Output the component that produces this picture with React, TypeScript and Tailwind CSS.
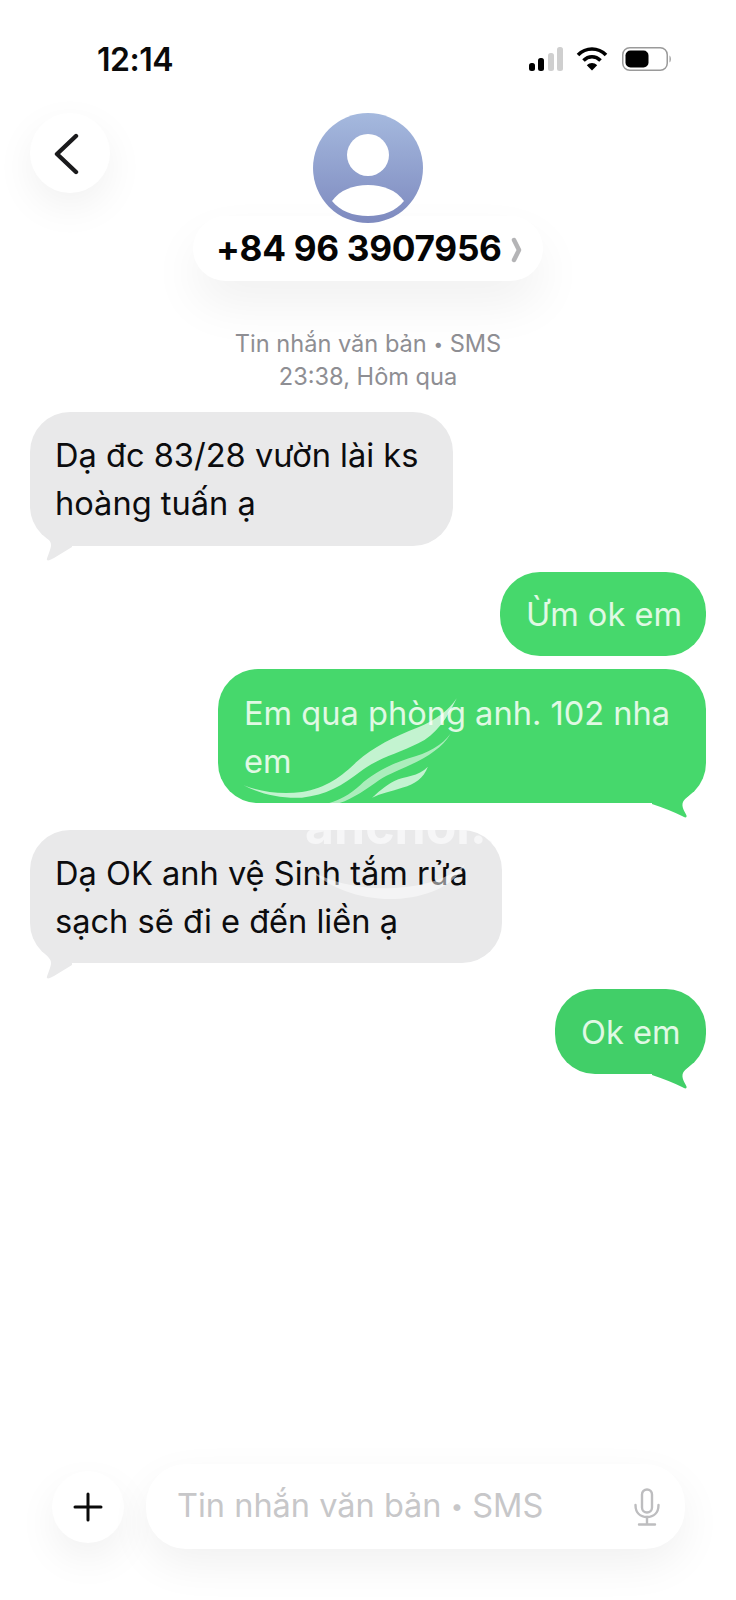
import React from "react";

function GrayTail() {
  return (
    <svg className="absolute left-[10px] top-[118px]" width="40" height="32" viewBox="0 0 40 32">
      <path d="M0 0 C4 6 12 10 11 16 C10 22 6 29 7 30 C8 31 10 30 14 28 L32 17 L32 0 Z" fill="#e9e9ea" />
    </svg>
  );
}

function GreenTail({ color }: { color: string }) {
  return (
    <svg className="absolute right-0 bottom-[-17px]" width="60" height="50" viewBox="0 0 60 50">
      <path d="M6 30 L6 34 C18 38 28 42 36 46 C39 48 41 48 40.5 45.5 C39 42 35 37 37 32 C39 28 45 25 49 18 L6 18 Z" fill={color} />
    </svg>
  );
}

function Swoosh() {
  return (
    <svg
      className="absolute inset-0 w-full h-full pointer-events-none"
      viewBox="55 58 1425 400"
      preserveAspectRatio="none"
      fill="#ffffff"
    >
      <path opacity="0.68" d="M752 145 C730 180 690 210 640 232 C570 260 510 290 460 335 C420 375 370 415 300 425 C240 433 180 425 130 405 C180 432 240 445 300 442 C370 435 420 405 470 365 C510 330 580 310 640 280 C690 255 725 205 752 145 Z" />
      <path opacity="0.55" d="M735 250 C710 285 670 310 610 325 C550 345 500 375 470 405 C440 432 410 450 380 458 L410 458 C450 445 490 415 525 390 C575 355 690 330 735 250 Z" />
      <path opacity="0.68" d="M668 350 C640 380 600 378 570 392 C540 408 520 428 505 442 C530 430 560 424 595 412 C630 402 655 385 668 350 Z" />
    </svg>
  );
}

function Watermark() {
  return (
    <div className="absolute inset-0 overflow-hidden rounded-[38px] pointer-events-none">
      <div className="absolute left-[275px] top-[-26px] text-[50px] leading-[44px] font-bold text-[#f6f6f7] whitespace-nowrap">
        anchoi.a
      </div>
      <svg className="absolute left-[280px] top-[34px]" width="160" height="36" viewBox="0 0 160 36">
        <path d="M0 6 C20 18 50 26 85 24 C115 22 140 14 155 0 C145 22 115 34 85 35 C50 36 20 24 0 6 Z" fill="#ffffff" opacity="0.5" />
      </svg>
    </div>
  );
}

function Bubble({
  children,
  green,
  last,
  className,
  tail,
  overlay,
}: {
  children: React.ReactNode;
  green?: boolean;
  last?: boolean;
  className: string;
  tail?: React.ReactNode;
  overlay?: React.ReactNode;
}) {
  return (
    <div
      className={`relative rounded-[40px] text-[32.6px] leading-[48px] whitespace-nowrap ${
        green ? "text-[#e0f9e4]" : "text-[#0c0c0e]"
      } ${green ? (last ? "bg-[#41cf68]" : "bg-[#46d86c]") : "bg-[#e9e9ea]"} ${className}`}
    >
      {tail}
      <div className="relative">{children}</div>
      {overlay}
    </div>
  );
}

export default function App() {
  return (
    <div
      className="relative w-[736px] h-[1600px] bg-white overflow-hidden flex flex-col px-[30px]"
      style={{ fontFamily: 'Inter, "Noto Sans", "Liberation Sans", sans-serif' }}
    >
      {/* status bar */}
      <div className="h-[113px] flex items-start justify-between pt-[42px] pl-[67px] pr-[34px] shrink-0">
        <div className="text-[32px] leading-[36px] font-semibold text-[#0a0a0a] tracking-[-0.5px]">12:14</div>
        <div className="flex items-center gap-[12px] pt-[5px]">
          <svg width="36" height="24" viewBox="0 0 36 24">
            <rect x="1" y="16" width="6" height="8" rx="2.5" fill="#000" />
            <rect x="10" y="11" width="6" height="13" rx="2.5" fill="#000" />
            <rect x="20" y="6" width="6" height="18" rx="2.5" fill="#cfcfcf" />
            <rect x="29" y="0" width="6" height="24" rx="2.5" fill="#cfcfcf" />
          </svg>
          <svg width="32" height="24" viewBox="0 0 32 24" fill="none" stroke="#000" strokeWidth="3.6">
            <path d="M2 8 C10 0 22 0 30 8" />
            <path d="M7.5 13.5 C12.5 8.5 19.5 8.5 24.5 13.5" />
            <path d="M16 23.5 L10.8 18.2 C14 15.4 18 15.4 21.2 18.2 Z" fill="#000" stroke="none" />
          </svg>
          <svg className="ml-[2px]" width="50" height="24" viewBox="0 0 50 24" fill="none">
            <rect x="0.75" y="0.75" width="44.5" height="22.5" rx="7" stroke="#9a9a9a" strokeWidth="1.5" />
            <rect x="3.5" y="3.5" width="23" height="17" rx="5" fill="#000" />
            <path d="M47.5 8.5 C49.3 9.5 49.3 14.5 47.5 15.5 Z" fill="#9a9a9a" />
          </svg>
        </div>
      </div>

      {/* header */}
      <div className="grid grid-cols-[80px_1fr_80px] shrink-0">
        <div className="w-[80px] h-[80px] rounded-full bg-white shadow-[0_14px_40px_rgba(0,0,0,0.06)] flex items-center justify-center">
          <svg width="30" height="42" viewBox="0 0 30 42" fill="none" stroke="#1a1a1c" strokeWidth="4.4" strokeLinecap="round" strokeLinejoin="round" className="mr-[8px] mt-[2px]">
            <path d="M25 3 L6 21 L25 39" />
          </svg>
        </div>
        <div className="flex flex-col items-center">
          <div className="relative z-10 w-[110px] h-[110px] rounded-full overflow-hidden bg-gradient-to-b from-[#a5b9de] to-[#7e8abf]">
            <svg width="110" height="110" viewBox="0 0 110 110" fill="#ffffff">
              <circle cx="55" cy="42" r="21" />
              <path d="M19 88 C27 77 40 72 55 72 C70 72 83 77 91 88 C83 98 70 103 55 103 C40 103 27 98 19 88 Z" />
            </svg>
          </div>
          <div className="-mt-[7px] w-[350px] h-[65px] rounded-full bg-white shadow-[0_24px_50px_rgba(0,0,0,0.06)] flex items-center pl-[23px]">
            <span className="text-[35.2px] font-bold text-[#050505] tracking-[-0.3px]">+84 96 3907956</span>
            <svg className="ml-[9px] mt-[2px]" width="11" height="26" viewBox="0 0 11 26" fill="none" stroke="#b4b4b6" strokeWidth="4.5" strokeLinecap="round" strokeLinejoin="round">
              <path d="M3 3 L8 13 L3 23" />
            </svg>
          </div>
        </div>
        <div />
      </div>

      {/* timestamp */}
      <div className="mt-[46px] text-center text-[23.6px] leading-[33px] text-[#8e8e93] shrink-0">
        <div className="h-[33px]">
          Tin nhắn văn bản <span className="text-[17px] leading-none align-[2px]">•</span> SMS
        </div>
        <div className="h-[33px]">23:38, Hôm qua</div>
      </div>

      {/* messages */}
      <div className="mt-[19px] flex flex-col">
        <Bubble className="self-start w-[423px] h-[134px] pl-[25px] pt-[19px]" tail={<GrayTail />}>
          Dạ đc 83/28 vườn lài ks
          <br />
          hoàng tuấn ạ
        </Bubble>
        <Bubble green className="self-end mt-[26px] w-[206px] h-[84px] pl-[26px] pt-[18px]">
          Ừm ok em
        </Bubble>
        <Bubble
          green
          className="self-end mt-[13px] w-[488px] h-[134px] pl-[26px] pt-[20px]"
          tail={<GreenTail color="#46d86c" />}
          overlay={<Swoosh />}
        >
          Em qua phòng anh. 102 nha
          <br />
          em
        </Bubble>
        <Bubble
          className="self-start mt-[27px] w-[472px] h-[133px] pl-[25px] pt-[19px]"
          tail={<GrayTail />}
          overlay={<Watermark />}
        >
          Dạ OK anh vệ Sinh tắm rửa
          <br />
          sạch sẽ đi e đến liền ạ
        </Bubble>
        <Bubble
          green
          last
          className="self-end mt-[26px] w-[151px] h-[85px] pl-[26px] pt-[19px]"
          tail={<GreenTail color="#41cf68" />}
        >
          Ok em
        </Bubble>
      </div>

      {/* input */}
      <div className="mt-auto mb-[51px] ml-[22px] mr-[21px] flex items-center gap-[22px] shrink-0">
        <div className="w-[72px] h-[72px] rounded-full bg-white shadow-[0_16px_40px_rgba(0,0,0,0.06)] flex items-center justify-center">
          <svg width="30" height="30" viewBox="0 0 30 30" fill="none" stroke="#0a0a0a" strokeWidth="3" strokeLinecap="round">
            <path d="M15 2 V28 M2 15 H28" />
          </svg>
        </div>
        <div className="flex-1 h-[85px] rounded-[40px] bg-white shadow-[0_16px_44px_rgba(0,0,0,0.06)] flex items-center justify-between pl-[31px] pr-[24px]">
          <span className="text-[32.5px] text-[#c7c7c9]">
            Tin nhắn văn bản <span className="text-[22px] leading-none align-[3px]">•</span> SMS
          </span>
          <svg width="28" height="38" viewBox="0 0 28 38" fill="none" stroke="#bdbdbf" strokeWidth="2.4" strokeLinecap="round">
            <rect x="9" y="1.5" width="10" height="23" rx="5" />
            <path d="M2.5 17 C2.5 25 7.5 29 14 29 C20.5 29 25.5 25 25.5 17" />
            <path d="M14 29 V36 M6 36.5 H22" />
          </svg>
        </div>
      </div>
    </div>
  );
}
